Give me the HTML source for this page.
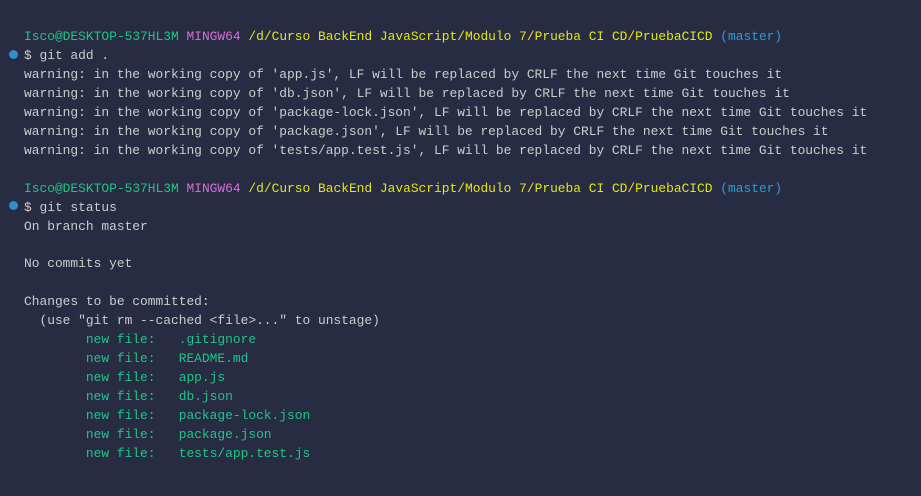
<!DOCTYPE html>
<html><head><meta charset="utf-8"><style>
html,body{margin:0;padding:0;width:921px;height:496px;overflow:hidden;background:#272c43;}
pre{margin:0;position:absolute;left:24px;top:28px;font-family:"Liberation Mono",monospace;font-size:12.9px;line-height:18.95px;color:#cccccc;white-space:pre;}
.g{color:#1fc48a}.m{color:#d670d6}.y{color:#e5e510}.b{color:#2f9ad8}
.dot{position:absolute;left:9px;width:9px;height:9px;border-radius:50%;background:#2f8fc7;}
</style></head><body>
<div class="dot" style="top:50px"></div>
<div class="dot" style="top:201px"></div>
<pre><span class="g">Isco@DESKTOP-537HL3M</span> <span class="m">MINGW64</span> <span class="y">/d/Curso BackEnd JavaScript/Modulo 7/Prueba CI CD/PruebaCICD</span> <span class="b">(master)</span>
$ git add .
warning: in the working copy of 'app.js', LF will be replaced by CRLF the next time Git touches it
warning: in the working copy of 'db.json', LF will be replaced by CRLF the next time Git touches it
warning: in the working copy of 'package-lock.json', LF will be replaced by CRLF the next time Git touches it
warning: in the working copy of 'package.json', LF will be replaced by CRLF the next time Git touches it
warning: in the working copy of 'tests/app.test.js', LF will be replaced by CRLF the next time Git touches it

<span class="g">Isco@DESKTOP-537HL3M</span> <span class="m">MINGW64</span> <span class="y">/d/Curso BackEnd JavaScript/Modulo 7/Prueba CI CD/PruebaCICD</span> <span class="b">(master)</span>
$ git status
On branch master

No commits yet

Changes to be committed:
  (use "git rm --cached &lt;file&gt;..." to unstage)
<span class="g">        new file:   .gitignore
        new file:   README.md
        new file:   app.js
        new file:   db.json
        new file:   package-lock.json
        new file:   package.json
        new file:   tests/app.test.js</span>
</pre>
</body></html>
